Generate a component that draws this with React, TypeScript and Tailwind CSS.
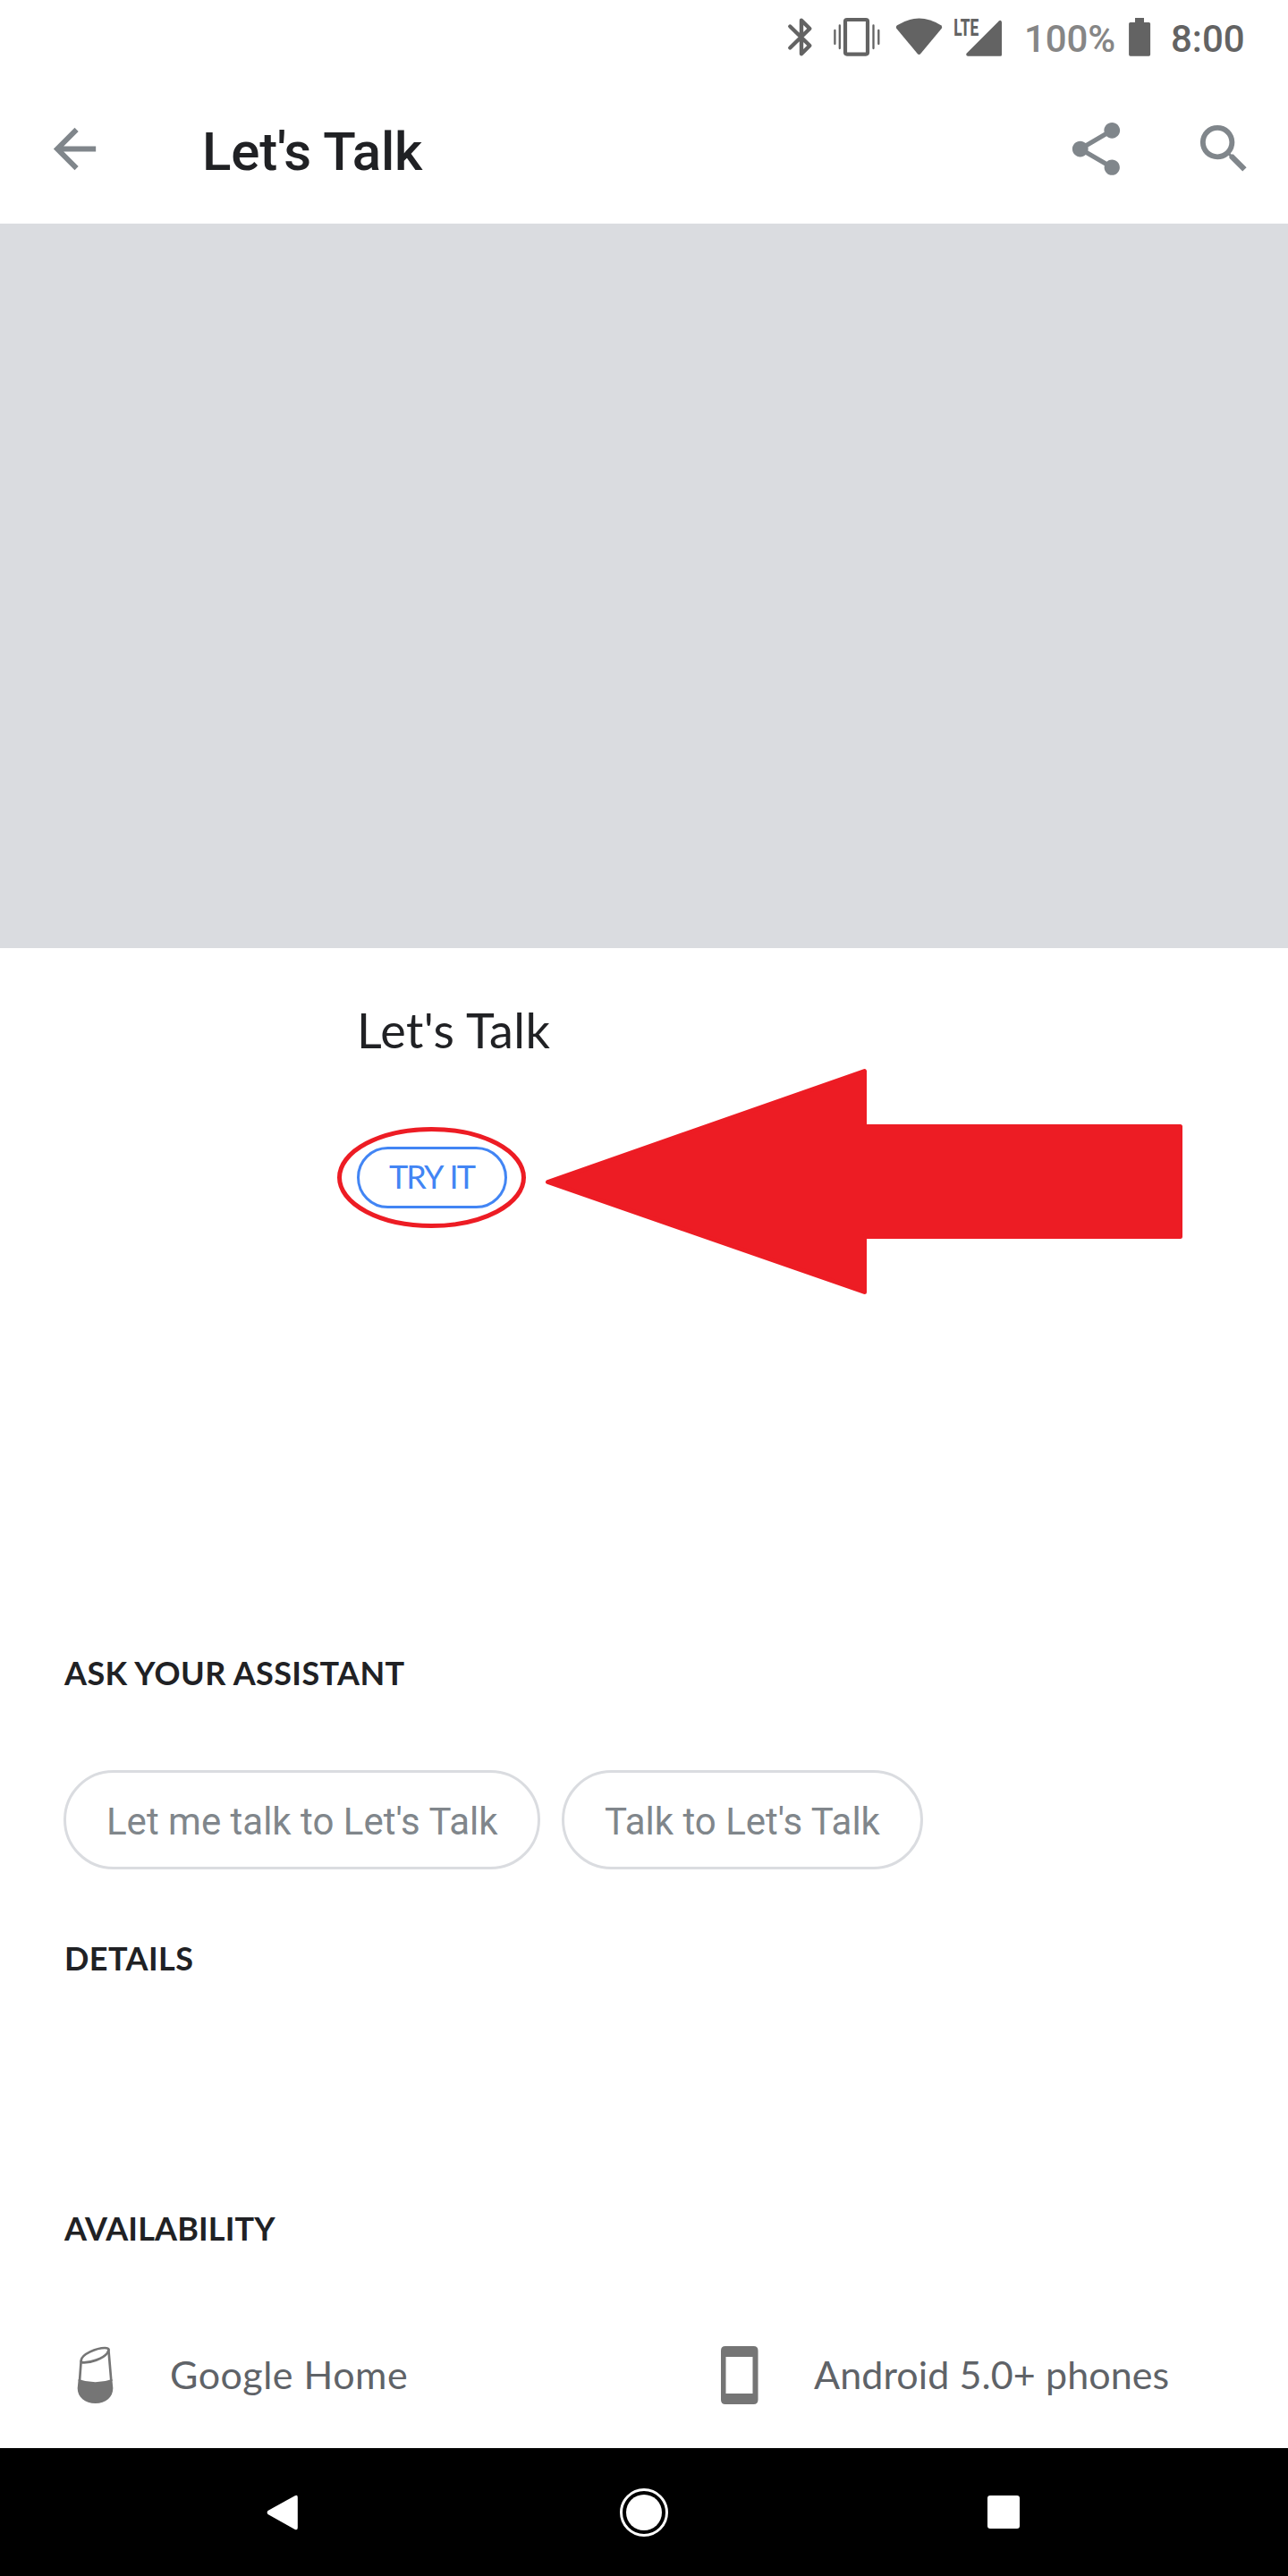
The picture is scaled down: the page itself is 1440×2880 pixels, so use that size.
import type { ReactNode } from "react";
import { MdArrowBack, MdSearch, MdShare } from "react-icons/md";

function StatusBar() {
  return (
    <div className="flex h-20 items-start pl-[880px] pt-[18px] text-[#636363]">
      <svg className="h-[46px] w-[30px]" viewBox="880 18 30 46" fill="none" stroke="currentColor" strokeWidth="4.4" strokeLinecap="round" strokeLinejoin="round">
        <path d="M883.3 29.5 905.3 51 896 60.2V22.8l9.3 9.2-22 21.5" />
      </svg>
      <svg className="ml-5 h-[46px] w-14" viewBox="930 18 56 46" fill="none" stroke="currentColor" strokeLinecap="round">
        <rect x="945" y="22" width="25" height="38.6" rx="2" strokeWidth="4.2" />
        <path strokeWidth="2.3" d="M933.4 34v15M938.8 28.500v25.500M976.500 28.500v25.500M982.300 34v15" />
      </svg>
      <svg className="ml-[14px] h-[46px] w-[56px]" viewBox="1000 18 56 46" fill="currentColor">
        <path d="M1003 28.300Q1027.500 12.700 1052 28.300 1054 30 1052.600 32L1029.500 59.800Q1027.500 62.200 1025.500 59.800L1002.400 32Q1001 30 1003 28.300Z" />
      </svg>
      <svg className="mt-[-10px] ml-2 h-[56px] w-[60px]" viewBox="1064 8 60 56" fill="currentColor">
        <text x="1066.300" y="39.600" fontSize="26" fontWeight="800" fontFamily="Roboto, sans-serif" textLength="28" lengthAdjust="spacingAndGlyphs">LTE</text>
        <path d="M1082 62.700H1118.500Q1120 62.700 1120 61.200V24.800Q1119.200 21.800 1116.800 23.400L1080.800 59.600Q1079.200 62 1082 62.700Z" />
      </svg>
      <span className="ml-[21px] mt-px w-[116px] text-[42px] leading-[49px] font-medium tracking-[-0.1px] text-[#868686]">100%</span>
      <svg className="h-[46px] w-7" viewBox="1261 18 28 46" fill="currentColor">
        <path d="M1269 20h10v5h5.500q1.600 0 1.600 1.600v34.500q0 1.600-1.600 1.600h-20.800q-1.600 0-1.600-1.600V26.600q0-1.600 1.600-1.600h5.300Z" />
      </svg>
      <span className="ml-5 mt-px text-[42px] leading-[49px] font-medium">8:00</span>
    </div>
  );
}

function AppBar() {
  return (
    <header className="flex h-[170px] items-start text-[#80868b]">
      <MdArrowBack className="ml-[48px] mt-[51px] size-[71px]" />
      <h1 className="ml-[107px] mt-[54px] flex-1 text-[60px] leading-[71px] font-medium tracking-[-0.2px] text-[#202124]">Let's Talk</h1>
      <MdShare className="mt-[51px] size-[71px]" />
      <MdSearch className="ml-[72px] mr-[36px] mt-[51px] size-[71px]" />
    </header>
  );
}

function Heading({ children, className }: { children: ReactNode; className: string }) {
  return <h2 className={`pl-px font-['Lato',sans-serif] text-[36px] leading-[44px] font-bold text-[#202124] ${className}`}>{children}</h2>;
}

function Chip({ children, className }: { children: ReactNode; className: string }) {
  return (
    <button className={`flex h-[111px] items-start rounded-full border-[3px] border-[#dadce0] pl-[45px] pt-[30px] text-[42px] leading-[49px] whitespace-nowrap text-[#80868b] ${className}`}>
      {children}
    </button>
  );
}

function HomeSpeakerIcon() {
  return (
    <svg className="mt-[-9px] ml-[13px] h-[70px] w-[45px]" viewBox="102 510 135 210" fill="none" stroke="#757575" strokeWidth="8" strokeLinejoin="round">
      <path d="M122 567C124 546 173 525 202 525C221 525 214 534 210 542C196 561 152 576 127 574Q122 573 122 567Z" />
      <path d="M122 568 117 636M214 530 223 636" />
      <path stroke="none" fill="#757575" d="M113 630Q170 650 226 630L229 660C229 690 205 711 170 711C135 711 110 690 110 660Z" />
    </svg>
  );
}

function PhoneIcon() {
  return (
    <svg className="mt-[-6px] h-[65px] w-[42px]" viewBox="0 0 42 65" fill="#757575">
      <path fillRule="evenodd" d="M5 0H36.500Q41.500 0 41.500 5V60Q41.500 65 36.500 65H5Q0 65 0 60V5Q0 0 5 0ZM5.500 12V53H35.500V12Z" />
    </svg>
  );
}

function Annotations() {
  return (
    <svg className="pointer-events-none absolute top-[1180px] left-[360px] h-[280px] w-[980px]" viewBox="360 1180 980 280" fill="none" stroke="#ed1c24">
      <ellipse cx="482.500" cy="1316.500" rx="103" ry="54" strokeWidth="5" />
      <path d="M612.500 1321.500 966.500 1197.500V1259.500H1319.500V1382.500H966.500V1444.500Z" fill="#ed1c24" strokeWidth="5" strokeLinejoin="round" />
    </svg>
  );
}

function NavBar() {
  return (
    <nav className="flex h-[143px] items-center bg-black text-white">
      <svg className="ml-[298px] h-[40px] w-[36px]" viewBox="298 2788.500 36 40" fill="currentColor">
        <path d="M299.500 2806.500 329.800 2789.700Q332.800 2788.500 332.800 2791.500V2825.500Q332.800 2828.800 329.800 2827.500L299.500 2810.500Q297.800 2808.500 299.500 2806.500Z" />
      </svg>
      <span className="ml-[359px] flex size-[54px] items-center justify-center rounded-full border-[3px] border-white">
        <span className="size-[40px] rounded-full bg-white" />
      </span>
      <span className="ml-[357px] h-[37px] w-[36px] rounded-[3px] bg-white" />
    </nav>
  );
}

export default function App() {
  return (
    <div className="relative flex h-[2880px] w-[1440px] flex-col overflow-hidden bg-white font-['Roboto',sans-serif]">
      <StatusBar />
      <AppBar />
      <div className="h-[810px] bg-[#dadce0]" />
      <main className="flex flex-1 flex-col">
        <section className="h-[788px] pl-[399px] pt-[59px] font-['Lato',sans-serif]">
          <h2 className="text-[54px] leading-[65px] tracking-[0.4px] text-[#202124]">Let's Talk</h2>
          <button className="mt-[98px] flex h-[69px] w-[168px] items-start rounded-full border-[3px] border-[#4285f4] pl-[33px] pt-[8px] text-[36px] leading-[44px] tracking-[-1.9px] [word-spacing:2px] whitespace-nowrap text-[#4285f4]">
            TRY IT
          </button>
        </section>
        <section className="pl-[71px]">
          <Heading className="tracking-[0.4px]">ASK YOUR ASSISTANT</Heading>
          <div className="mt-[87px] flex gap-6">
            <Chip className="w-[533px]">Let me talk to Let's Talk</Chip>
            <Chip className="w-[404px]">Talk to Let's Talk</Chip>
          </div>
          <Heading className="mt-[77px] tracking-[0.45px]">DETAILS</Heading>
          <Heading className="mt-[258px] tracking-[0.15px]">AVAILABILITY</Heading>
          <div className="mt-[116px] flex items-start font-['Lato',sans-serif] text-[43px] leading-[52px] text-[#5f6368]">
            <div className="flex w-[735px] items-start">
              <HomeSpeakerIcon />
              <span className="ml-[61px] tracking-[0.5px]">Google Home</span>
            </div>
            <div className="flex items-start">
              <PhoneIcon />
              <span className="ml-[62px] tracking-[0.1px]">Android 5.0+ phones</span>
            </div>
          </div>
        </section>
      </main>
      <NavBar />
      <Annotations />
    </div>
  );
}
